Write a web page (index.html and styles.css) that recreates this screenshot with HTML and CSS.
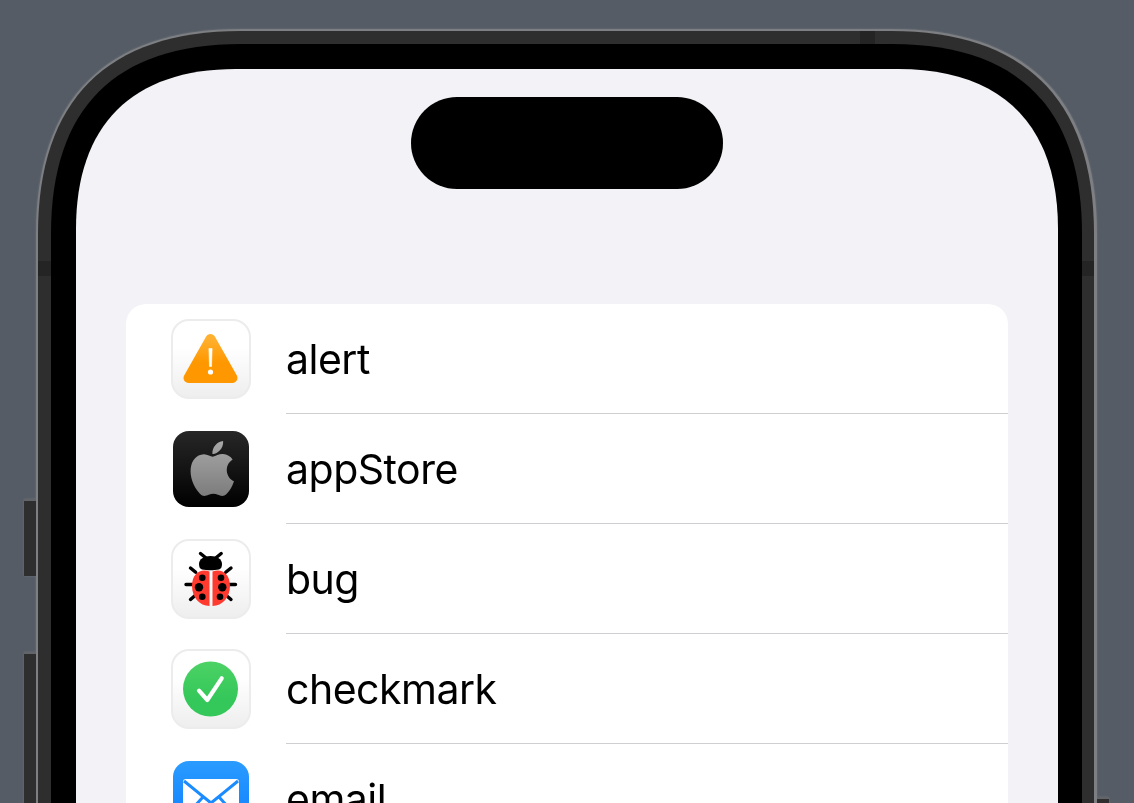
FILE: index.html
```html
<!DOCTYPE html>
<html lang="en">
<head>
<meta charset="utf-8">
<title>Icons</title>
<link rel="stylesheet" href="styles.css">
</head>
<body>
<div class="device">
  <span class="btn btn-action"></span>
  <span class="btn btn-volume"></span>
  <span class="btn btn-power"></span>
  <div class="edge">
    <div class="bezel">
      <span class="band band-left"></span>
      <span class="band band-right"></span>
      <span class="band band-top"></span>
      <div class="glass">
        <div class="screen">
          <div class="island"></div>
          <ul class="card">
            <li class="row">
              <div class="tile tile-light">
                <svg class="glyph" viewBox="2 2 76 76">
                  <defs><linearGradient id="ga" x1="0" y1="0" x2="0" y2="1"><stop offset="0" stop-color="#ffb02e"/><stop offset=".6" stop-color="#ff9800"/></linearGradient></defs>
                  <path d="M39.500 20 61.500 59H17.500Z" fill="url(#ga)" stroke="url(#ga)" stroke-width="10" stroke-linejoin="round"/>
                  <path d="M37.900 29.500h3.200l-.6 18h-2Z" fill="#fff" stroke="#fff" stroke-width=".6" stroke-linejoin="round"/>
                  <circle cx="39.500" cy="53" r="2.600" fill="#fff"/>
                </svg>
              </div>
              <div class="label">alert</div>
            </li>
            <li class="row">
              <div class="tile tile-dark">
                <svg class="glyph" viewBox="0 0 76 76">
                  <defs><linearGradient id="gb" x1="0" y1="0" x2="0" y2="1"><stop offset="0" stop-color="#a8a8a8"/><stop offset="1" stop-color="#7c7c7c"/></linearGradient></defs>
                  <path transform="translate(5 .9) scale(2.860 3.050)" fill="url(#gb)" d="M17.050 20.280c-.98.95-2.050.8-3.080.35-1.090-.46-2.090-.48-3.240 0-1.440.62-2.200.44-3.060-.35C2.790 15.250 3.510 7.590 9.050 7.310c1.350.07 2.290.74 3.080.8 1.180-.24 2.310-.93 3.570-.84 1.510.12 2.650.72 3.400 1.800-3.120 1.870-2.380 5.980.48 7.130-.57 1.500-1.310 2.990-2.540 4.090zM12.030 7.250c-.15-2.230 1.660-4.070 3.740-4.250.29 2.580-2.340 4.500-3.740 4.250z"/>
                </svg>
              </div>
              <div class="label">appStore</div>
            </li>
            <li class="row">
              <div class="tile tile-light">
                <svg class="glyph" viewBox="2 2 76 76">
                  <g stroke="#000" stroke-width="3.400" stroke-linecap="round" fill="none">
                    <path d="M34.700 18.700 29.500 14.500M45 18.700 50.200 14.500M19.500 29 24.700 33.300M60 29 54.700 33.300M15 45.500H22.300M64.500 45.500H57.300M19.500 60.500 24.700 56M60 60.500 54.700 56"/>
                  </g>
                  <path d="M28 25c0-5 5-8 11.500-8S51 20 51 25c0 3-1 5-3 5.500-5 1-12 1-17 0-2-.5-3-2.500-3-5.500Z" fill="#000"/>
                  <path d="M38.500 32.500C30 29 21 34 21 47c0 11 7.500 20 17.500 20Zm3 0C50 29 59 34 59 47c0 11-7.500 20-17.500 20Z" fill="#ff3b30"/>
                  <g fill="#000">
                    <circle cx="31.300" cy="38.700" r="3.300"/><circle cx="28" cy="48.300" r="4.200"/><circle cx="31.300" cy="57.700" r="3.300"/>
                    <circle cx="50" cy="38.700" r="3.300"/><circle cx="51.300" cy="48.300" r="4.200"/><circle cx="49" cy="57.700" r="3.300"/>
                  </g>
                </svg>
              </div>
              <div class="label">bug</div>
            </li>
            <li class="row">
              <div class="tile tile-light">
                <svg class="glyph" viewBox="2 2 76 76">
                  <defs><linearGradient id="gc" x1="0" y1="0" x2="0" y2="1"><stop offset="0" stop-color="#4cd265"/><stop offset=".7" stop-color="#34c759"/></linearGradient></defs>
                  <circle cx="39.500" cy="40" r="27.500" fill="url(#gc)"/>
                  <path d="M28 41.700 36.300 51 50.700 29.300" fill="none" stroke="#fff" stroke-width="4.200" stroke-linecap="round" stroke-linejoin="round"/>
                </svg>
              </div>
              <div class="label">checkmark</div>
            </li>
            <li class="row">
              <div class="tile tile-blue">
                <svg class="glyph" viewBox="0 0 76 76">
                  <rect x="10" y="18" width="56" height="42" rx="3" fill="#fff"/>
                  <path d="M11 20 38 42 65 20M11 57 30 36M65 57 46 36" fill="none" stroke="#1a8cff" stroke-width="3"/>
                </svg>
              </div>
              <div class="label">email</div>
            </li>
          </ul>
        </div>
      </div>
    </div>
  </div>
</div>
</body>
</html>
```
FILE: styles.css
```css
html, body {
  margin: 0;
  height: 803px;
  overflow: hidden;
  background: #555c65;
}

.device {
  position: relative;
  box-sizing: border-box;
  width: 1061px;
  height: 1100px;
  margin: 29px 0 0 36px;
  filter: drop-shadow(0 0 1px #6b7179);
}

.btn {
  position: absolute;
  left: -12px;
  box-sizing: border-box;
  width: 12px;
  background: #2e2e2e;
  border-top: 2px solid #62646a;
}
.btn-action { top: 470px; height: 77px; }
.btn-volume { top: 623px; height: 300px; }
.btn-power { left: auto; right: -12px; top: 768px; height: 300px; }

.edge {
  box-sizing: border-box;
  height: 100%;
  padding: 2px 3px 2px 2px;
  clip-path: path("M0 205C0 70 70 0 205 0H856C991 0 1061 70 1061 205V1100H0Z");
  background: #7d7f82;
}

.bezel {
  position: relative;
  box-sizing: border-box;
  height: 100%;
  padding: 13px 12px 13px 13px;
  clip-path: path("M0 203C0 69 69 0 203 0H853C987 0 1056 69 1056 203V1096H0Z");
  background: #2e2e2e;
}

.band {
  position: absolute;
  background: #242424;
}
.band-left { left: 0; top: 230px; width: 13px; height: 15px; }
.band-right { right: 0; top: 230px; width: 12px; height: 15px; }
.band-top { left: 822px; top: 0; width: 15px; height: 13px; }

.glass {
  box-sizing: border-box;
  height: 100%;
  padding: 25px 24px 25px 25px;
  clip-path: path("M0 190C0 64 64 0 190 0H841C967 0 1031 64 1031 190V1070H0Z");
  background: #000;
}

.screen {
  box-sizing: border-box;
  height: 100%;
  padding: 28px 50px 0;
  clip-path: path("M0 160C0 56 56 0 160 0H822C926 0 982 56 982 160V1020H0Z");
  background: #f2f2f7;
}

.island {
  width: 312px;
  height: 92px;
  margin: 0 auto 115px;
  border-radius: 46px;
  background: #000;
}

.card {
  list-style: none;
  margin: 0;
  padding: 0;
  border-radius: 20px;
  background: #fff;
}

.row {
  display: flex;
  align-items: center;
  gap: 35px;
  height: 110px;
  padding-left: 45px;
}

.tile {
  box-sizing: border-box;
  display: flex;
  flex: none;
  width: 80px;
  height: 80px;
  border-radius: 18px;
}
.tile-light {
  border: 2px solid #ececed;
  background: linear-gradient(#ffffff 35%, #eeeeef);
}
.tile-dark, .tile-blue {
  width: 76px;
  height: 76px;
  margin: 0 2px;
  border-radius: 16px;
}
.tile-dark { background: linear-gradient(#272727, #000); }
.tile-blue { background: linear-gradient(#2a9bff, #0a7cff); }

.glyph {
  display: block;
  width: 100%;
  height: 100%;
}

.label {
  flex: 1;
  display: flex;
  align-items: center;
  align-self: stretch;
  box-sizing: border-box;
  border-bottom: 1px solid #cfcfd1;
  font-family: Inter, "Liberation Sans", sans-serif;
  font-size: 41px;
  letter-spacing: -0.5px;
  color: #000;
}
```
